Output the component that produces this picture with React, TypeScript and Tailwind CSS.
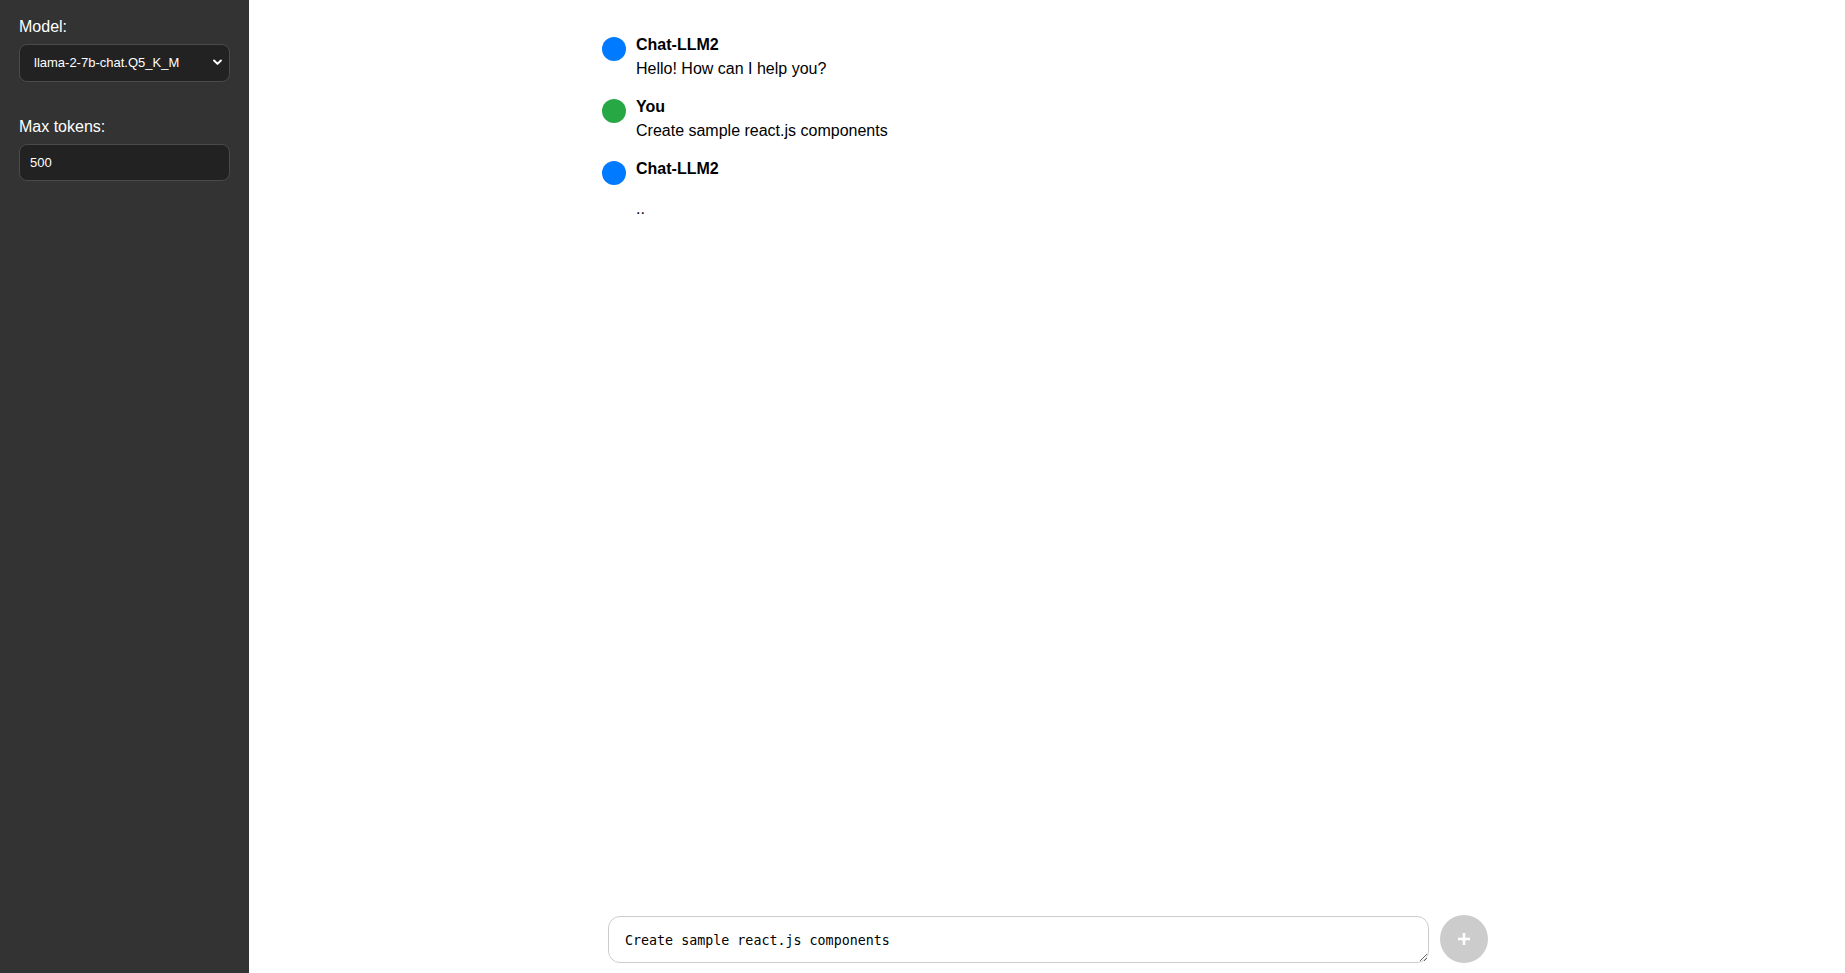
import React from 'react';

const MESSAGES = [
  { name: 'Chat-LLM2', color: 'bg-[#007bff]', text: 'Hello! How can I help you?', gap: false },
  { name: 'You', color: 'bg-[#28a745]', text: 'Create sample react.js components', gap: false },
  { name: 'Chat-LLM2', color: 'bg-[#007bff]', text: '..', gap: true },
];

const Sidebar: React.FC = () => (
  <aside className="w-[249px] shrink-0 bg-[#333333] px-[19px] pt-[18px] text-white">
    <label className="block text-[16px] leading-[18px] mb-[8px]">Model:</label>
    <div className="relative">
      <select
        className="appearance-none w-full h-[38px] rounded-[8px] border border-[#4a4a4a] bg-[#222222] pl-[14px] pr-8 text-[13px] text-white outline-none"
        defaultValue="llama-2-7b-chat.Q5_K_M"
      >
        <option>llama-2-7b-chat.Q5_K_M</option>
      </select>
      <svg className="absolute right-[8px] top-[15px] w-[9px] h-[7px] pointer-events-none" viewBox="0 0 10 7" fill="none">
        <path d="M1.2 1.2 5 5 8.8 1.2" stroke="white" strokeWidth="2.2" strokeLinecap="round" strokeLinejoin="round" />
      </svg>
    </div>
    <label className="block text-[16px] leading-[18px] mt-[36px] mb-[8px]">Max tokens:</label>
    <input
      className="w-full h-[37px] rounded-[8px] border border-[#4a4a4a] bg-[#222222] px-[10px] text-[13px] text-white outline-none"
      defaultValue="500"
    />
  </aside>
);

const App: React.FC = () => {
  return (
    <div className="flex h-screen w-full overflow-hidden bg-white font-['Liberation_Sans',Arial,sans-serif]">
      <Sidebar />
      <main className="flex flex-1 flex-col">
        <div className="flex-1 overflow-y-auto">
          <div className="mx-auto w-[900px] pl-[5px] pr-[3px] pt-[33px]">
            {MESSAGES.map((m, i) => (
              <div key={i} className="flex items-start gap-[10px] mb-[14px]">
                <div className={`w-[24px] h-[24px] rounded-full shrink-0 mt-[4px] ${m.color}`} />
                <div className="text-[16px] leading-[24px] text-black">
                  <div className="font-bold">{m.name}</div>
                  <div className={m.gap ? 'mt-4' : ''}>{m.text}</div>
                </div>
              </div>
            ))}
          </div>
        </div>
        <div className="mx-auto w-[900px] pl-[11px] pr-[9px] pb-[10px]">
          <div className="flex items-center gap-[11px]">
            <textarea
              rows={1}
              defaultValue="Create sample react.js components"
              className="flex-1 h-[47px] rounded-[12px] border border-[#cccccc] px-4 pt-[15px] pb-[13px] text-[13.33px] leading-[17px] font-['DejaVu_Sans_Mono',monospace] text-black outline-none"
            />
            <button className="w-[48px] h-[48px] rounded-full bg-[#cccccc] flex items-center justify-center shrink-0">
              <svg className="w-[14px] h-[14px]" viewBox="0 0 14 14">
                <path d="M7 1v12M1 7h12" stroke="white" strokeWidth="2.6" />
              </svg>
            </button>
          </div>
        </div>
      </main>
    </div>
  );
};

export default App;
